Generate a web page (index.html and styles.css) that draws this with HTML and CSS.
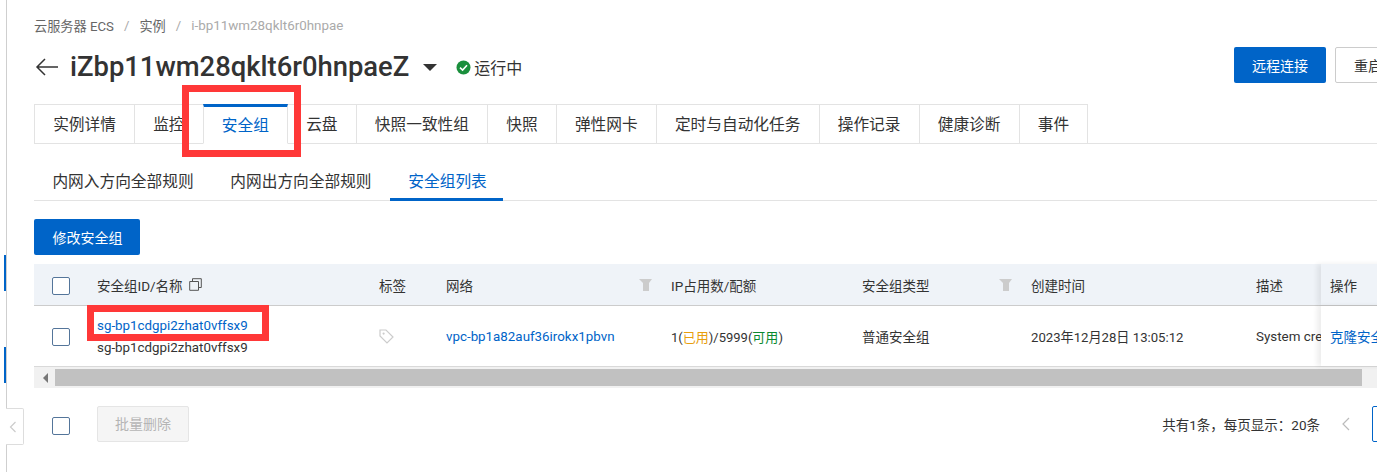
FILE: index.html
```html
<!DOCTYPE html>
<html lang="zh">
<head>
<meta charset="utf-8">
<title>安全组</title>
<link rel="stylesheet" href="styles.css">
</head>
<body>
<div class="shell">
  <aside class="rail">
    <i class="rail-mark"></i>
    <i class="rail-mark rail-mark-second"></i>
    <button class="collapse" aria-label="收起">
      <svg width="8" height="12" viewBox="0 0 8 12"><path d="M6.5 1 1.5 6l5 5" fill="none" stroke="#ccc" stroke-width="1.2"/></svg>
    </button>
  </aside>
  <main class="page">
    <nav class="crumbs">
      <span>云服务器 ECS</span><span class="sep">/</span><span>实例</span><span class="sep">/</span><span class="crumb-last">i-bp11wm28qklt6r0hnpae</span>
    </nav>
    <header class="title-row">
      <svg class="back" width="24" height="18" viewBox="0 0 24 18"><path d="M23 9H2M10 1 2 9l8 8" fill="none" stroke="#333" stroke-width="1.5"/></svg>
      <h1 class="title">iZbp11wm28qklt6r0hnpaeZ</h1>
      <svg class="caret" width="14" height="7" viewBox="0 0 14 7"><path d="M0 0h14L7 7z" fill="#333"/></svg>
      <svg class="ok" width="15" height="15" viewBox="0 0 15 15"><circle cx="7.5" cy="7.5" r="7" fill="#1a8f3c"/><path d="M4 7.6 6.6 10 11 5.3" fill="none" stroke="#fff" stroke-width="1.6"/></svg>
      <span class="status">运行中</span>
      <div class="actions">
        <button class="btn btn-primary btn-wide">远程连接</button>
        <button class="btn btn-default">重启</button>
      </div>
    </header>
    <div class="tabs">
      <a class="tab">实例详情</a>
      <a class="tab">监控</a>
      <a class="tab tab-active">安全组</a>
      <a class="tab">云盘</a>
      <a class="tab">快照一致性组</a>
      <a class="tab">快照</a>
      <a class="tab">弹性网卡</a>
      <a class="tab">定时与自动化任务</a>
      <a class="tab">操作记录</a>
      <a class="tab">健康诊断</a>
      <a class="tab">事件</a>
    </div>
    <div class="subtabs">
      <a class="subtab">内网入方向全部规则</a>
      <a class="subtab">内网出方向全部规则</a>
      <a class="subtab subtab-active">安全组列表</a>
    </div>
    <button class="btn btn-primary btn-modify">修改安全组</button>
    <section class="table">
      <div class="row row-head">
        <div class="cell"><i class="check"></i></div>
        <div class="cell">安全组ID/名称
          <svg class="copy" width="13" height="13" viewBox="0 0 13 13"><path d="M3.5 3.5V.7h8.8v8.8H9.5M.7 3.5h8.8v8.8H.7z" fill="none" stroke="#555" stroke-width="1"/></svg>
        </div>
        <div class="cell">标签</div>
        <div class="cell cell-filter">网络
          <svg class="funnel" width="13" height="12" viewBox="0 0 13 12"><path d="M0 0h13l-3 4v8H4V4z" fill="#ccc"/></svg>
        </div>
        <div class="cell">IP占用数/配额</div>
        <div class="cell cell-filter">安全组类型
          <svg class="funnel" width="13" height="12" viewBox="0 0 13 12"><path d="M0 0h13l-3 4v8H4V4z" fill="#ccc"/></svg>
        </div>
        <div class="cell">创建时间</div>
        <div class="cell cell-clip">描述</div>
        <div class="cell cell-fixed">操作</div>
      </div>
      <div class="row row-body">
        <div class="cell"><i class="check"></i></div>
        <div class="cell cell-stack"><a class="link id">sg-bp1cdgpi2zhat0vffsx9</a><span class="id">sg-bp1cdgpi2zhat0vffsx9</span></div>
        <div class="cell">
          <svg width="15" height="15" viewBox="0 0 15 15"><path d="M1 1h6l7 7-6 6-7-7z" fill="none" stroke="#ccc" stroke-width="1.2"/><circle cx="4.6" cy="4.6" r="1.1" fill="#ccc"/></svg>
        </div>
        <div class="cell"><a class="link id">vpc-bp1a82auf36irokx1pbvn</a></div>
        <div class="cell cell-quota"><span>1(<span class="used">已用</span>)/5999(<span class="free">可用</span>)</span></div>
        <div class="cell">普通安全组</div>
        <div class="cell cell-date">2023年12月28日 13:05:12</div>
        <div class="cell cell-clip">System created security group</div>
        <div class="cell cell-fixed"><a class="link">克隆安全组</a></div>
      </div>
      <div class="scrollbar">
        <span class="scroll-arrow"></span>
        <span class="scroll-thumb"></span>
      </div>
    </section>
    <footer class="footer">
      <i class="check"></i>
      <button class="btn btn-disabled">批量删除</button>
      <div class="pager">
        <span>共有1条，每页显示：20条</span>
        <svg class="pager-prev" width="9" height="14" viewBox="0 0 9 14"><path d="M8 1 2 7l6 6" fill="none" stroke="#bbb" stroke-width="1.2"/></svg>
        <button class="page-current">1</button>
      </div>
    </footer>
    <div class="mark mark-tab"></div>
    <div class="mark mark-link"></div>
  </main>
</div>
</body>
</html>
```
FILE: styles.css
```css
* { box-sizing: border-box; }
html, body { margin: 0; height: 100%; overflow: hidden; background: #fff; }
body { font-family: Roboto, "Noto Sans CJK SC", sans-serif; font-size: 13.5px; color: #333; }
.shell { display: flex; width: 1447px; height: 472px; }

.rail { position: relative; flex: 0 0 7px; border-right: 1px solid #cfcfcf; padding-top: 255px; }
.rail-mark { display: block; width: 2px; height: 36px; margin-left: 4px; background: #0064c8; }
.rail-mark-second { margin-top: 56px; }
.collapse { position: absolute; left: 6px; top: 408px; width: 18px; height: 37px; padding: 0 0 0 3px; background: #fff; border: 1px solid #ddd; border-left: 0; border-radius: 0 2px 2px 0; display: flex; align-items: center; }

.page { position: relative; flex: 1; padding: 15px 46px 0 27px; min-width: 0; }

.crumbs { display: flex; align-items: center; height: 20px; font-size: 13.2px; color: #666; }
.sep { margin: 0 10px; color: #aaa; }
.crumb-last { color: #aaa; font-size: 13.4px; }

.title-row { display: flex; align-items: center; height: 40px; margin-top: 12px; }
.back { margin: 0 11px 0 1px; }
.title { margin: 0; font-size: 27.4px; font-weight: 500; line-height: 40px; color: #333; }
.caret { margin: 0 19px 0 14px; }
.ok { margin-right: 3px; }
.status { font-size: 16px; }
.actions { display: flex; gap: 9px; margin-left: auto; align-self: flex-start; }

.btn { height: 36px; padding: 0 19px; border-radius: 2px; font: inherit; font-size: 14px; border: 1px solid transparent; }
.btn-wide { width: 92px; padding: 0; }
.btn-primary { background: #0064c8; color: #fff; }
.btn-default { padding: 0 18px; background: #fff; border-color: #ccc; color: #333; }
.btn-disabled { width: 92px; padding: 0 0 2px; background: #f5f5f5; border-color: #e5e5e5; color: #b5b5b5; }

.tabs { display: flex; height: 40px; margin-top: 17px; border-bottom: 1px solid #e3e3e3; }
.tab { padding: 0 18.15px; height: 40px; margin-right: -1px; font-size: 15.7px; line-height: 39px; border: 1px solid #e3e3e3; white-space: nowrap; background: #fff; }
.tab-active { position: relative; color: #0064c8; border-bottom-color: #fff; border-top: 3px solid #0064c8; line-height: 37px; z-index: 1; }

.subtabs { display: flex; height: 57px; padding-top: 17px; border-bottom: 1px solid #e3e3e3; }
.subtab { height: 40px; padding: 0 18.4px; font-size: 15.7px; line-height: 41px; white-space: nowrap; }
.subtab-active { padding-right: 16.5px; color: #0064c8; border-bottom: 3px solid #0064c8; }

.btn-modify { display: block; width: 106px; padding: 0 0 1px 1px; margin-top: 18px; }

.table { margin-top: 9px; width: 1374px; }
.row { display: grid; grid-template-columns: 63px 282px 67px 225px 191px 169px 225px 65px 80px; }
.row-head { height: 42px; background: #eff3f8; border-bottom: 1px solid #ccc; }
.row-body { height: 61px; border-bottom: 1px solid #d9d9d9; }
.cell { display: flex; align-items: center; min-width: 0; white-space: nowrap; }
.cell-stack { flex-direction: column; align-items: flex-start; justify-content: center; line-height: 22px; padding-top: 2px; }
.cell-filter { justify-content: space-between; padding-right: 19px; }
.cell-clip { overflow: hidden; font-size: 13.4px; }
.cell-quota { font-size: 13px; }
.cell-date { font-size: 13.15px; }
.id { font-size: 13.35px; }
.cell-fixed { position: relative; padding-left: 9px; overflow: hidden; box-shadow: -4px 0 5px rgba(0,0,0,.07); }
.row-body .cell-fixed { background: #fff; }
.row-head .cell-fixed { background: #eff3f8; }

.check { display: block; width: 18px; height: 18px; margin: 2px 0 0 18px; background: #fff; border: 1px solid #54759a; border-radius: 2px; }
.link { color: #0064c8; }
.copy { margin-left: 6px; }
.funnel { display: block; }
.used { color: #e89e0c; }
.free { color: #0a8a2e; }

.scrollbar { display: flex; align-items: center; height: 21px; background: #f1f1f1; }
.scroll-arrow { width: 0; height: 0; margin: 0 8px 0 9px; border-style: solid; border-width: 5px 5px 5px 0; border-color: transparent #777 transparent transparent; }
.scroll-thumb { width: 1307px; height: 17px; margin-left: -1px; background: #c1c1c1; }

.footer { display: flex; align-items: center; height: 36px; margin-top: 18px; }
.footer .check { margin-top: 4px; }
.footer .btn-disabled { margin-left: 27px; }
.pager { display: flex; align-items: center; margin-left: auto; }
.pager-prev { margin: 0 22px 0 21px; }
.page-current { width: 29px; height: 36px; padding: 0; background: #fff; border: 1px solid #0064c8; border-radius: 2px; color: #0064c8; font: inherit; }

.mark { position: absolute; border: 7px solid #ff3838; pointer-events: none; }
.mark-tab { left: 175px; top: 85px; width: 119px; height: 72px; }
.mark-link { left: 80px; top: 305px; width: 182px; height: 36px; }
```
